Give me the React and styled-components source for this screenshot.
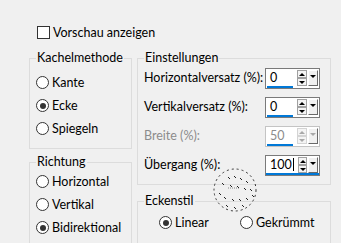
import styled, { createGlobalStyle } from "styled-components";

const Global = createGlobalStyle`
  html, body { margin: 0; padding: 0; background: #f0f0f0; }
  body {
    font-family: Lato, "Noto Sans", sans-serif;
    font-size: 12.5px;
    color: #000;
  }
`;

const Dialog = styled.div`
  position: relative;
  width: 341px;
  height: 243px;
  overflow: hidden;
  background: #f0f0f0;
`;

const TopRow = styled.label`
  display: flex;
  align-items: center;
  gap: 3px;
  height: 14px;
  padding: 25px 0 0 37px;
`;

const CheckBox = styled.span`
  width: 13px;
  height: 13px;
  box-sizing: border-box;
  border: 1px solid #333;
  background: #fff;
`;

const Main = styled.div`
  display: flex;
  gap: 5px;
  padding-left: 29px;
  margin-top: 12px;
`;

const Column = styled.div`
  display: flex;
  flex-direction: column;
  gap: ${(p) => p.$gap || 0}px;
  width: ${(p) => p.$width}px;
`;

const Group = styled.fieldset`
  margin: 0;
  min-width: 0;
  border: 1px solid #dcdcdc;
  padding: ${(p) => p.$pad};
  display: flex;
  flex-direction: ${(p) => (p.$row ? "row" : "column")};
  gap: ${(p) => p.$gap || 0}px;
`;

const Legend = styled.legend`
  padding: 0 1px;
  margin-left: ${(p) => p.$shift || 0}px;
  line-height: 14px;
  height: 14px;
`;

const RadioRow = styled.label`
  display: flex;
  align-items: center;
  gap: 3px;
  height: 13px;
  white-space: nowrap;
  width: ${(p) => (p.$width ? p.$width + "px" : "auto")};
`;

const RadioCircle = styled.span`
  width: 13px;
  height: 13px;
  flex: none;
  box-sizing: border-box;
  border-radius: 50%;
  border: 1px solid #333;
  background: #fff;
  display: flex;
  align-items: center;
  justify-content: center;
  &::after {
    content: "";
    width: 6px;
    height: 6px;
    border-radius: 50%;
    background: ${(p) => (p.$checked ? "#333" : "transparent")};
  }
`;

const FieldRow = styled.div`
  display: flex;
  align-items: center;
  height: 21px;
`;

const Label = styled.span`
  flex: 1;
  white-space: nowrap;
  margin-top: -3px;
  color: ${(p) => (p.$disabled ? "#8c8c8c" : "#000")};
`;

const Spin = styled.div`
  display: flex;
  flex: none;
  width: 55px;
  height: 21px;
  box-sizing: border-box;
  border: 1px solid ${(p) => (p.$disabled ? "#c4c4c4" : "#7a7a7a")};
  background: #fff;
  box-shadow: ${(p) => (p.$focused ? "inset 0 -2px #0078d7" : "none")};
`;

const SpinField = styled.div`
  flex: 1;
  display: flex;
  align-items: center;
  padding-left: 3px;
  margin-left: 1px;
  margin-right: 4px;
  border-bottom: 2px solid ${(p) => (p.$focused ? "transparent" : "#0078d7")};
  color: ${(p) => (p.$disabled ? "#8c8c8c" : "#000")};
`;

const Caret = styled.span`
  width: 1px;
  height: 13px;
  margin-left: 1px;
  background: #000;
`;

const Arrows = styled.div`
  display: flex;
  flex-direction: column;
  padding: 1px 0 2px;
  width: 10px;
`;

const ArrowBtn = styled.div`
  flex: 1;
  box-sizing: border-box;
  border: 1px solid ${(p) => (p.$disabled ? "#d4d4d4" : "#a0a0a0")};
  background: #f4f4f4;
  display: flex;
  align-items: center;
  justify-content: center;
  &::after {
    content: "";
    border-left: 3px solid transparent;
    border-right: 3px solid transparent;
    ${(p) => (p.$up ? "border-bottom" : "border-top")}: 3px solid
      ${(p) => (p.$disabled ? "#a8a8a8" : "#000")};
  }
`;

const DropBtn = styled.div`
  width: 10px;
  margin: 1px 1px 2px 1px;
  box-sizing: border-box;
  background: #f0f0f0;
  border-top: 1px solid #fff;
  border-left: 1px solid #fff;
  border-right: 1px solid #696969;
  border-bottom: 1px solid #696969;
  display: flex;
  justify-content: center;
  padding-top: 4px;
  &::after {
    content: "";
    height: 0;
    border-left: 3px solid transparent;
    border-right: 3px solid transparent;
    border-top: 3px solid ${(p) => (p.$disabled ? "#a8a8a8" : "#000")};
  }
`;

const Stamp = styled.svg`
  position: absolute;
  left: 212px;
  top: 167px;
  pointer-events: none;
`;

function Radio({ label, checked, width }) {
  return (
    <RadioRow $width={width}>
      <RadioCircle $checked={checked} />
      {label}
    </RadioRow>
  );
}

function SpinBox({ value, disabled, focused }) {
  return (
    <Spin $disabled={disabled} $focused={focused}>
      <SpinField $disabled={disabled} $focused={focused}>
        {value}
        {focused && <Caret />}
      </SpinField>
      <Arrows>
        <ArrowBtn $up $disabled={disabled} />
        <ArrowBtn $disabled={disabled} />
      </Arrows>
      <DropBtn $disabled={disabled} />
    </Spin>
  );
}

const fields = [
  { label: "Horizontalversatz (%):", value: "0" },
  { label: "Vertikalversatz (%):", value: "0" },
  { label: "Breite (%):", value: "50", disabled: true },
  { label: "Übergang (%):", value: "100", focused: true },
];

const dashes = [
  [16, 10], [22, 9], [28, 11], [34, 14],
  [10, 16], [18, 18], [25, 19], [32, 21], [38, 22],
  [7, 26], [12, 30], [20, 32], [27, 32], [34, 31], [40, 28],
  [14, 38], [22, 40], [30, 38],
];

export default function App() {
  return (
    <Dialog>
      <Global />
      <TopRow>
        <CheckBox />
        Vorschau anzeigen
      </TopRow>
      <Main>
        <Column $width={103} $gap={6}>
          <Group $pad="11px 6px 13px 6px" $gap={10}>
            <Legend>Kachelmethode</Legend>
            <Radio label="Kante" />
            <Radio label="Ecke" checked />
            <Radio label="Spiegeln" />
          </Group>
          <Group $pad="6px 6px 20px 6px" $gap={10}>
            <Legend>Richtung</Legend>
            <Radio label="Horizontal" />
            <Radio label="Vertikal" />
            <Radio label="Bidirektional" checked />
          </Group>
        </Column>
        <Column $width={194} $gap={9}>
          <Group $pad="3px 10px 8px 6px" $gap={8}>
            <Legend>Einstellungen</Legend>
            {fields.map((f) => (
              <FieldRow key={f.label}>
                <Label $disabled={f.disabled}>{f.label}</Label>
                <SpinBox value={f.value} disabled={f.disabled} focused={f.focused} />
              </FieldRow>
            ))}
          </Group>
          <Group $pad="8px 6px 20px 21px" $row>
            <Legend $shift={-15}>Eckenstil</Legend>
            <Radio label="Linear" checked width={81} />
            <Radio label="Gekrümmt" />
          </Group>
        </Column>
      </Main>
      <Stamp width="48" height="46" viewBox="0 0 48 46">
        <circle cx="23" cy="23" r="21" fill="none" stroke="#333" strokeWidth="1" strokeDasharray="2 3" />
        <line x1="16" y1="21" x2="28" y2="21" stroke="#888" strokeWidth="1" strokeDasharray="1 1" />
        {dashes.map(([x, y], i) => (
          <line key={i} x1={x} y1={y} x2={x + 2} y2={y + 2} stroke="#222" strokeWidth="1" />
        ))}
      </Stamp>
    </Dialog>
  );
}
